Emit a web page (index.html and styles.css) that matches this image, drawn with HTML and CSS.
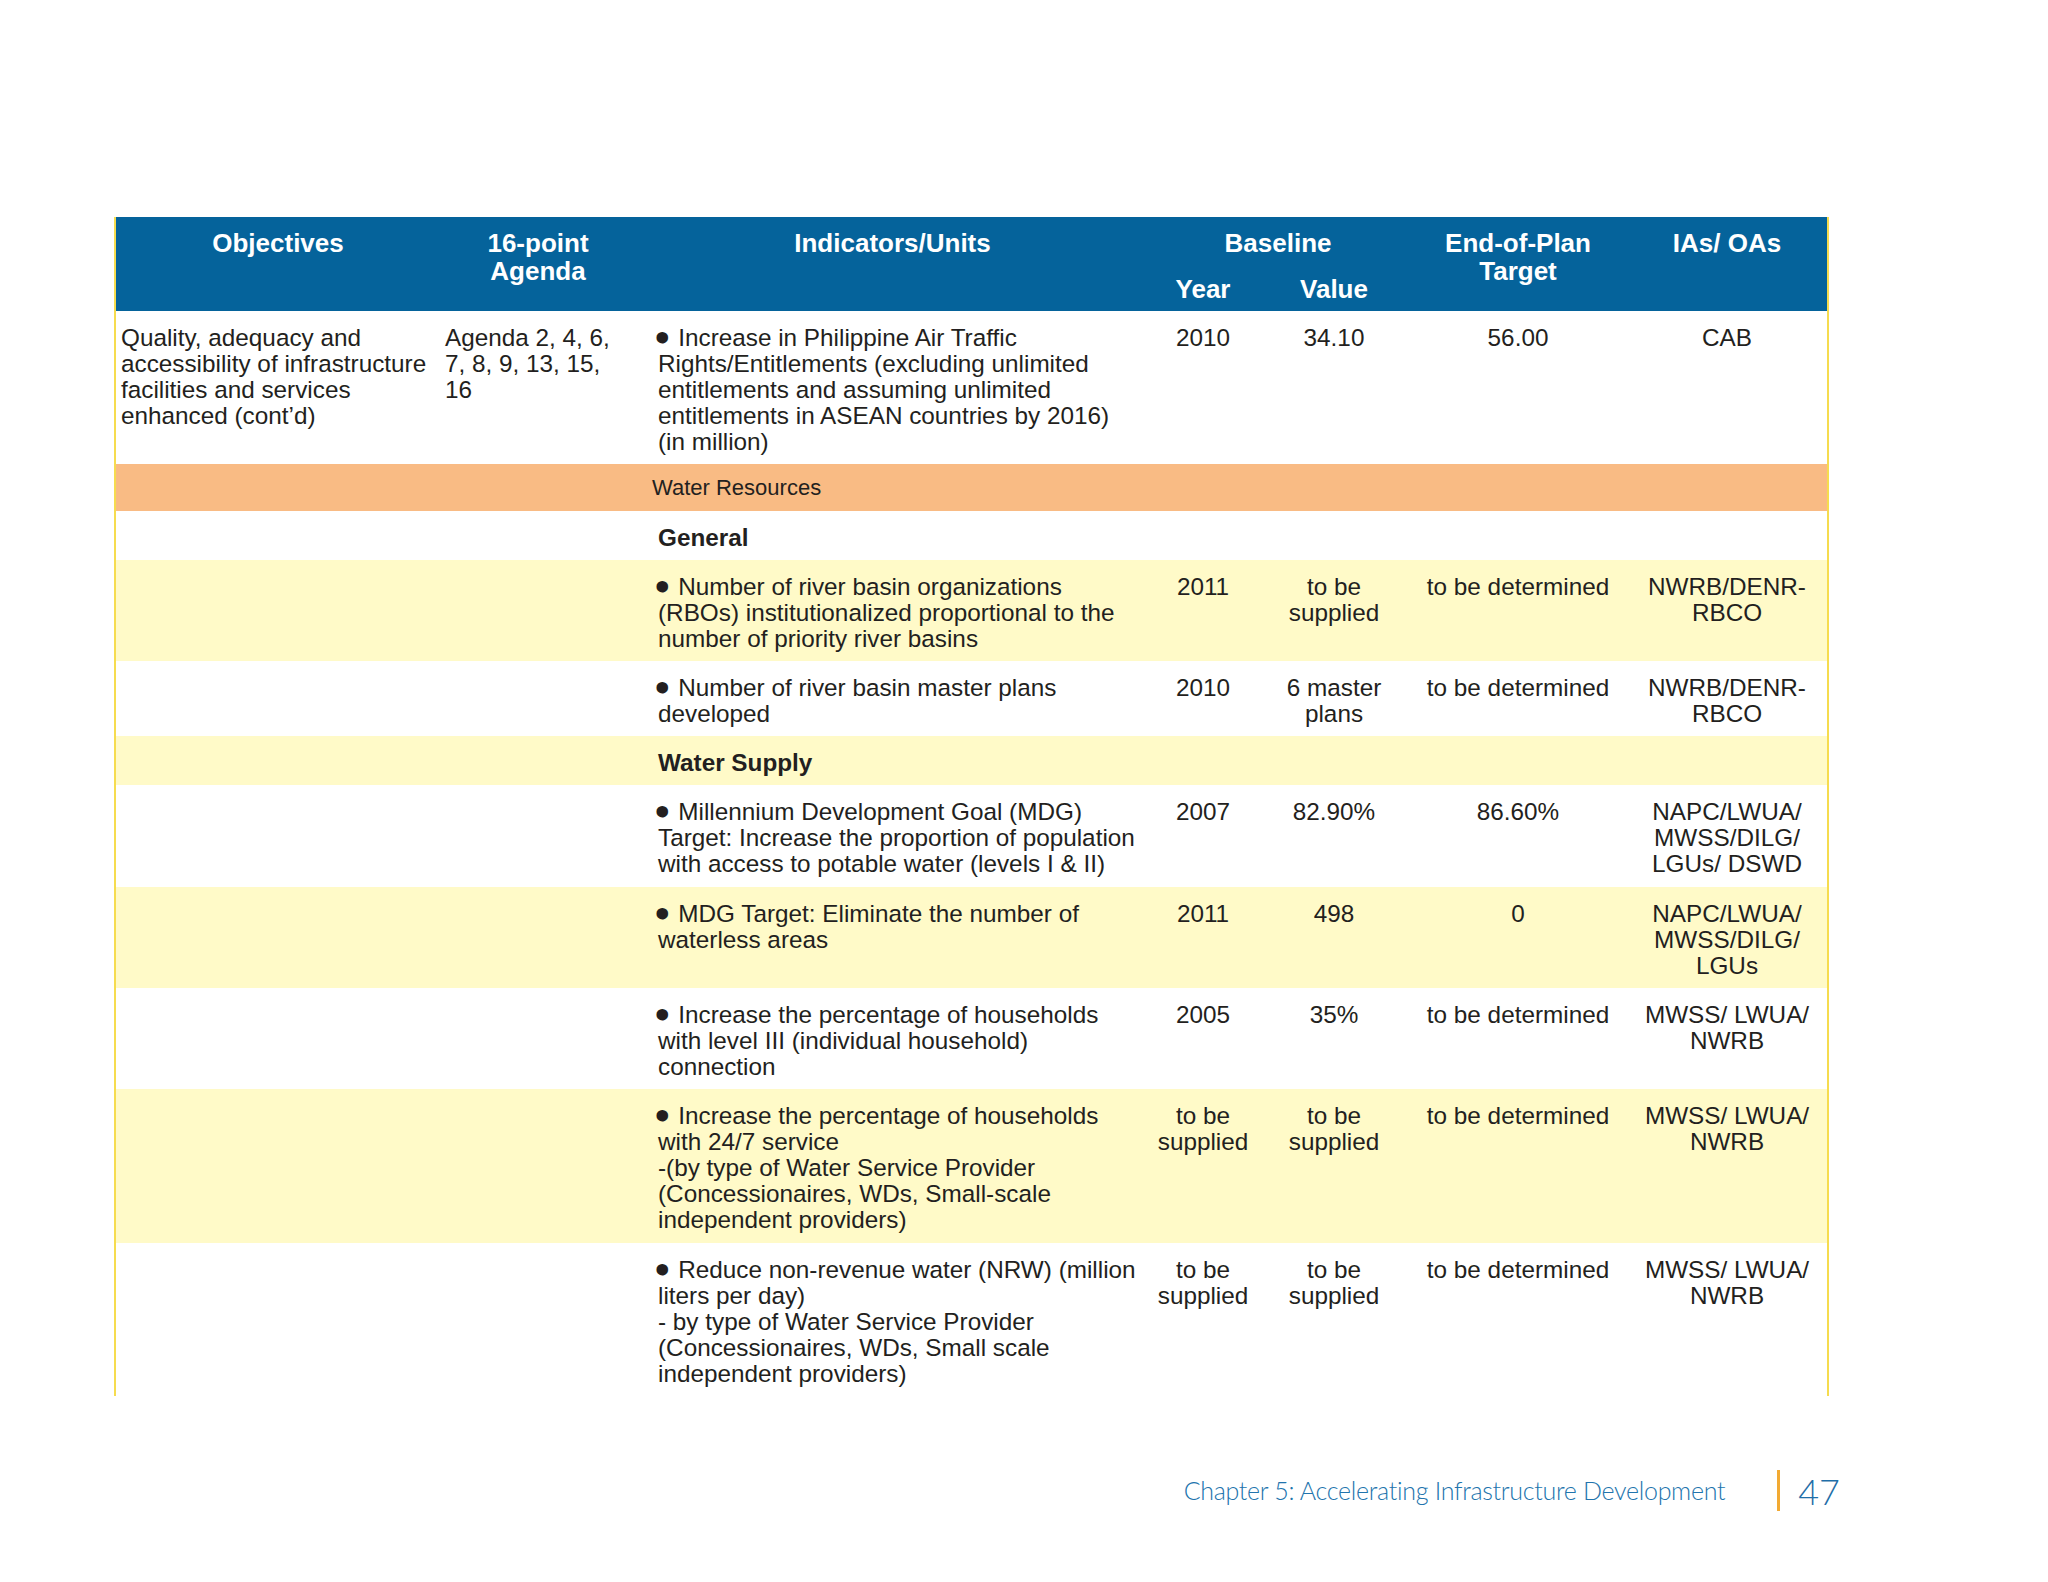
FILE: index.html
```html
<!DOCTYPE html>
<html lang="en">
<head>
<meta charset="utf-8">
<title>Chapter 5: Accelerating Infrastructure Development</title>
<link rel="stylesheet" href="styles.css">
</head>
<body>
<div class="page">
  <div class="sheet">
    <table class="matrix">
      <colgroup>
        <col class="c-obj"><col class="c-agenda"><col class="c-ind"><col class="c-year"><col class="c-value"><col class="c-target"><col class="c-ia">
      </colgroup>
      <thead>
        <tr class="h1">
          <th rowspan="2">Objectives</th>
          <th rowspan="2" class="h-agenda">16-point<br>Agenda</th>
          <th rowspan="2" class="h-ind">Indicators/Units</th>
          <th colspan="2">Baseline</th>
          <th rowspan="2">End-of-Plan<br>Target</th>
          <th rowspan="2">IAs/ OAs</th>
        </tr>
        <tr class="h2">
          <th>Year</th>
          <th>Value</th>
        </tr>
      </thead>
      <tbody>
        <tr>
          <td>Quality, adequacy and<br>accessibility of infrastructure<br>facilities and services<br>enhanced (cont’d)</td>
          <td>Agenda 2, 4, 6,<br>7, 8, 9, 13, 15,<br>16</td>
          <td class="ind"><span class="blt">•</span> Increase in Philippine Air Traffic<br>Rights/Entitlements (excluding unlimited<br>entitlements and assuming unlimited<br>entitlements in ASEAN countries by 2016)<br>(in million)</td>
          <td class="ctr">2010</td>
          <td class="ctr">34.10</td>
          <td class="ctr">56.00</td>
          <td class="ctr">CAB</td>
        </tr>
        <tr class="sector">
          <td></td>
          <td></td>
          <td colspan="5" class="sector-name">Water Resources</td>
        </tr>
        <tr>
          <td></td><td></td>
          <td class="ind sub">General</td>
          <td></td><td></td><td></td><td></td>
        </tr>
        <tr class="band">
          <td></td><td></td>
          <td class="ind"><span class="blt">•</span> Number of river basin organizations<br>(RBOs) institutionalized proportional to the<br>number of priority river basins</td>
          <td class="ctr">2011</td>
          <td class="ctr">to be<br>supplied</td>
          <td class="ctr">to be determined</td>
          <td class="ctr">NWRB/DENR-<br>RBCO</td>
        </tr>
        <tr>
          <td></td><td></td>
          <td class="ind"><span class="blt">•</span> Number of river basin master plans<br>developed</td>
          <td class="ctr">2010</td>
          <td class="ctr">6 master<br>plans</td>
          <td class="ctr">to be determined</td>
          <td class="ctr">NWRB/DENR-<br>RBCO</td>
        </tr>
        <tr class="band">
          <td></td><td></td>
          <td class="ind sub">Water Supply</td>
          <td></td><td></td><td></td><td></td>
        </tr>
        <tr>
          <td></td><td></td>
          <td class="ind"><span class="blt">•</span> Millennium Development Goal (MDG)<br>Target: Increase the proportion of population<br>with access to potable water (levels I &amp; II)</td>
          <td class="ctr">2007</td>
          <td class="ctr">82.90%</td>
          <td class="ctr">86.60%</td>
          <td class="ctr">NAPC/LWUA/<br>MWSS/DILG/<br>LGUs/ DSWD</td>
        </tr>
        <tr class="band">
          <td></td><td></td>
          <td class="ind"><span class="blt">•</span> MDG Target: Eliminate the number of<br>waterless areas</td>
          <td class="ctr">2011</td>
          <td class="ctr">498</td>
          <td class="ctr">0</td>
          <td class="ctr">NAPC/LWUA/<br>MWSS/DILG/<br>LGUs</td>
        </tr>
        <tr>
          <td></td><td></td>
          <td class="ind"><span class="blt">•</span> Increase the percentage of households<br>with level III (individual household)<br>connection</td>
          <td class="ctr">2005</td>
          <td class="ctr">35%</td>
          <td class="ctr">to be determined</td>
          <td class="ctr">MWSS/ LWUA/<br>NWRB</td>
        </tr>
        <tr class="band">
          <td></td><td></td>
          <td class="ind"><span class="blt">•</span> Increase the percentage of households<br>with 24/7 service<br>-(by type of Water Service Provider<br>(Concessionaires, WDs, Small-scale<br>independent providers)</td>
          <td class="ctr">to be<br>supplied</td>
          <td class="ctr">to be<br>supplied</td>
          <td class="ctr">to be determined</td>
          <td class="ctr">MWSS/ LWUA/<br>NWRB</td>
        </tr>
        <tr>
          <td></td><td></td>
          <td class="ind"><span class="blt">•</span> Reduce non-revenue water (NRW) (million<br>liters per day)<br>- by type of Water Service Provider<br>(Concessionaires, WDs, Small scale<br>independent providers)</td>
          <td class="ctr">to be<br>supplied</td>
          <td class="ctr">to be<br>supplied</td>
          <td class="ctr">to be determined</td>
          <td class="ctr">MWSS/ LWUA/<br>NWRB</td>
        </tr>
      </tbody>
    </table>
  </div>
  <footer class="page-foot">
    <span class="chapter">Chapter 5: Accelerating Infrastructure Development</span>
    <span class="divider"></span>
    <span class="pageno">47</span>
  </footer>
</div>
</body>
</html>
```

FILE: styles.css
```css
html, body {
  margin: 0;
  padding: 0;
  background: #ffffff;
}

.page {
  width: 2048px;
  height: 1582px;
  padding-top: 217px;
  box-sizing: border-box;
}

.sheet {
  margin-left: 114px;
  width: 1711px;
  border-left: 2px solid #f6dc4f;
  border-right: 2px solid #f6dc4f;
}

.matrix {
  width: 1711px;
  table-layout: fixed;
  border-collapse: collapse;
  border-spacing: 0;
  font-family: "Liberation Sans", Arial, sans-serif;
  font-size: 24.3px;
  line-height: 26.1px;
  color: #231f20;
}

.c-obj { width: 324px; }
.c-agenda { width: 206px; }
.c-ind { width: 501px; }
.c-year { width: 112px; }
.c-value { width: 150px; }
.c-target { width: 218px; }
.c-ia { width: 200px; }

.matrix thead th {
  background: #05639b;
  color: #ffffff;
  font-family: "Liberation Sans", Arial, sans-serif;
  font-weight: 700;
  font-size: 26px;
  line-height: 28px;
  text-align: center;
  vertical-align: top;
  padding: 0;
  white-space: nowrap;
}

.matrix .h1 th {
  padding-top: 12px;
  height: 28px;
}

.matrix .h2 th {
  padding-top: 18px;
  padding-bottom: 8px;
  height: 28px;
}

.matrix .h1 .h-agenda {
  padding-right: 10px;
}

.matrix .h1 .h-ind {
  padding-right: 8px;
}

.matrix td {
  vertical-align: top;
  padding: 14px 4px 9px 5px;
  white-space: nowrap;
  background: #ffffff;
}

.matrix td.ind {
  padding-left: 12px;
}

.blt {
  -webkit-text-stroke: 5px currentColor;
  margin-right: 5px;
}

.matrix td.ctr {
  text-align: center;
  padding-left: 2px;
  padding-right: 2px;
}

.matrix td.sub {
  font-weight: 700;
}

.matrix tr.band td {
  background: #fffac8;
}

.matrix tr.sector td {
  background: #f9bb84;
  padding-top: 11px;
  padding-bottom: 9px;
}

.matrix td.sector-name {
  font-size: 22px;
  padding-left: 6px;
  color: #231f20;
}

.page-foot {
  display: flex;
  justify-content: flex-end;
  align-items: center;
  margin-top: 74px;
  height: 41px;
  padding-right: 208px;
  font-family: Lato, "Liberation Sans", sans-serif;
  font-weight: 300;
  color: #2274ad;
}

.chapter {
  font-size: 25px;
  line-height: 25px;
  letter-spacing: -0.3px;
}

.divider {
  width: 3px;
  height: 41px;
  background: #f2aa33;
  margin-left: 52px;
  margin-right: 18px;
}

.pageno {
  font-size: 36px;
  line-height: 36px;
  color: #1f6ea8;
}
```
